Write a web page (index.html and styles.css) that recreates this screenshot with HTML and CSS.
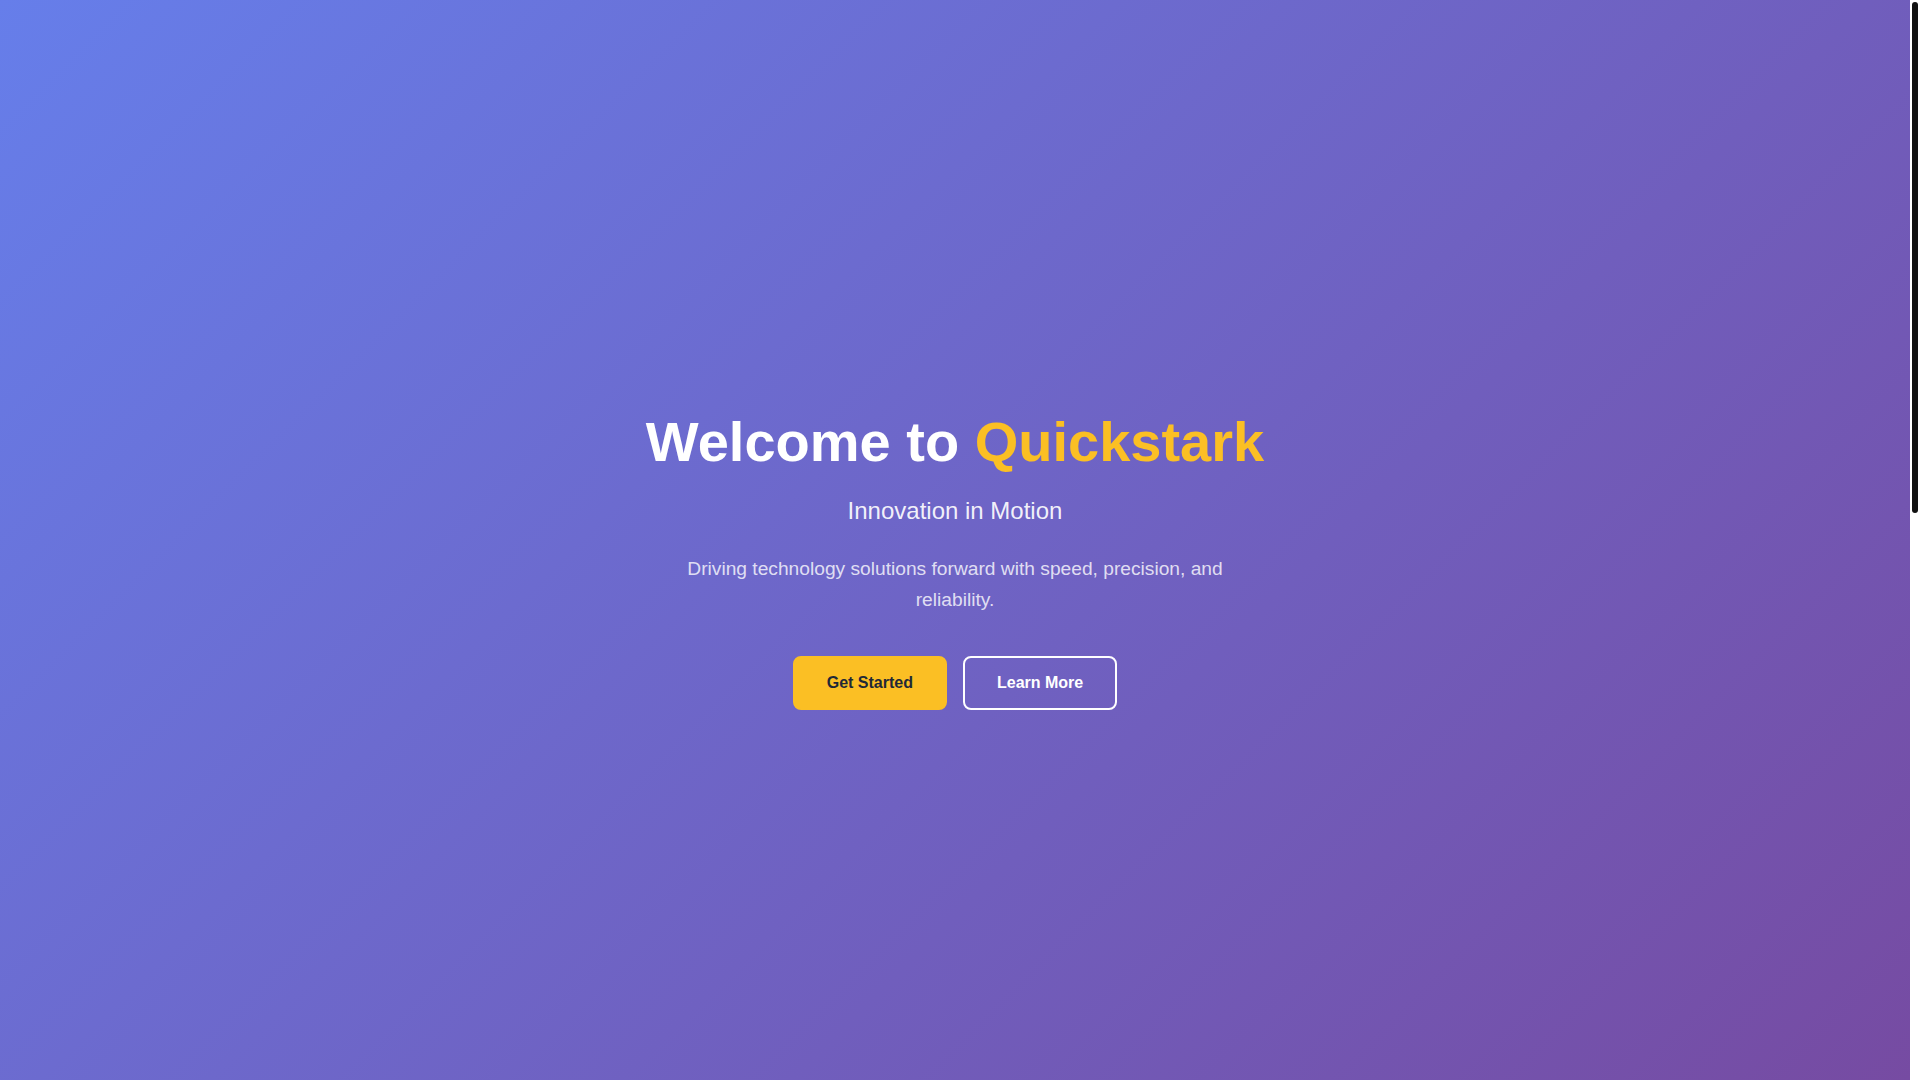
FILE: index.html
```html
<!DOCTYPE html>
<html lang="en">
<head>
<meta charset="utf-8">
<title>Quickstark</title>
<link rel="stylesheet" href="styles.css">
</head>
<body>
<div class="app">
  <main class="scroller">
    <section class="hero">
      <div class="hero-content">
        <h1 class="hero-title">Welcome to <span class="brand">Quickstark</span></h1>
        <p class="hero-subtitle">Innovation in Motion</p>
        <p class="hero-text">Driving technology solutions forward with speed, precision, and reliability.</p>
        <div class="hero-actions">
          <a class="btn btn-primary" href="#">Get Started</a>
          <a class="btn btn-outline" href="#">Learn More</a>
        </div>
      </div>
    </section>
    <section class="below"></section>
  </main>
  <div class="rail" aria-hidden="true"><div class="thumb"></div></div>
</div>
</body>
</html>
```

FILE: styles.css
```css
* { box-sizing: border-box; }
html, body { margin: 0; padding: 0; height: 100%; overflow: hidden; }
body {
  font-family: "Liberation Sans", Arial, sans-serif;
  color: #fff;
  background: #fff;
}
.app {
  display: flex;
  height: 100vh;
}
.scroller {
  flex: 1;
  min-width: 0;
  height: 100vh;
  overflow-y: auto;
}
.scroller::-webkit-scrollbar { width: 0; }
.rail {
  width: 10px;
  flex: none;
  background: #fff;
  padding: 2px;
}
.thumb {
  height: 511px;
  background: #111;
  border-radius: 3px;
}
.hero {
  min-height: 100vh;
  display: flex;
  align-items: center;
  justify-content: center;
  background: linear-gradient(135deg, #667eea 0%, #764ba2 100%);
  padding-top: 38px;
  text-align: center;
}
.hero-content {
  display: flex;
  flex-direction: column;
  align-items: center;
}
.hero-title {
  font-size: 56px;
  line-height: 1.2;
  font-weight: 700;
  margin: 0 0 16px;
}
.brand { color: #fbbf24; }
.hero-subtitle {
  font-size: 24px;
  line-height: 1.6;
  margin: 0 0 24px;
  color: rgba(255, 255, 255, 0.92);
}
.hero-text {
  font-size: 19.2px;
  line-height: 1.6;
  max-width: 600px;
  margin: 0 0 40px;
  color: rgba(255, 255, 255, 0.8);
}
.hero-actions {
  display: flex;
  gap: 16px;
}
.btn {
  display: inline-block;
  font-size: 16px;
  font-weight: 700;
  line-height: 18px;
  padding: 16px 32px;
  border: 2px solid transparent;
  border-radius: 8px;
  text-decoration: none;
}
.btn-primary {
  background: #fbbf24;
  border-color: #fbbf24;
  color: #1f2937;
}
.btn-outline {
  background: transparent;
  border-color: #fff;
  color: #fff;
}
.below {
  height: 1185px;
  background: #fff;
}
```
